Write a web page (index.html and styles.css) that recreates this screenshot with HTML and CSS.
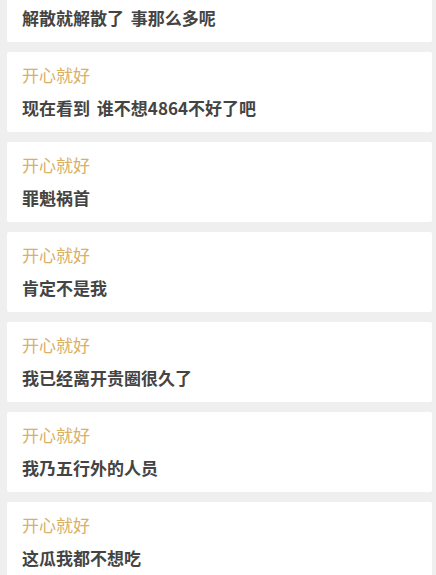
FILE: index.html
```html
<!DOCTYPE html>
<html lang="zh">
<head>
    <meta charset="UTF-8">
    <meta name="viewport" content="width=device-width, initial-scale=1.0">
    <title>评论</title>
    <link rel="stylesheet" href="styles.css">
</head>
<body>

    <div class="lista">
        <div class="comentario recortado">
            <div class="texto">解散就解散了 事那么多呢</div>
        </div>
        <div class="comentario">
            <div class="nombre">开心就好</div>
            <div class="texto">现在看到 谁不想4864不好了吧</div>
        </div>
        <div class="comentario">
            <div class="nombre">开心就好</div>
            <div class="texto">罪魁祸首</div>
        </div>
        <div class="comentario">
            <div class="nombre">开心就好</div>
            <div class="texto">肯定不是我</div>
        </div>
        <div class="comentario">
            <div class="nombre">开心就好</div>
            <div class="texto">我已经离开贵圈很久了</div>
        </div>
        <div class="comentario">
            <div class="nombre">开心就好</div>
            <div class="texto">我乃五行外的人员</div>
        </div>
        <div class="comentario">
            <div class="nombre">开心就好</div>
            <div class="texto">这瓜我都不想吃</div>
        </div>
    </div>

</body>
</html>
```

FILE: styles.css
```css
body {
    font-family: "Noto Sans CJK SC", "Noto Sans", sans-serif;
    background-color: #efefef;
    margin: 0;
    overflow: hidden;
}
.lista {
    display: flex;
    flex-direction: column;
    gap: 10px;
    padding: 0 4px 0 7px;
}
.comentario {
    background: white;
    height: 80px;
    box-sizing: border-box;
    padding: 12px 15px 0;
    border-radius: 2px;
}
.comentario.recortado {
    height: 42px;
    padding-top: 7px;
    border-radius: 0 0 2px 2px;
}
.recortado .texto {
    margin-top: 0;
}
.nombre {
    font-size: 17px;
    line-height: 22px;
    color: #d9b066;
}
.texto {
    margin-top: 11px;
    font-size: 17px;
    line-height: 22px;
    font-weight: bold;
    color: #444;
    word-spacing: 3px;
}
```
